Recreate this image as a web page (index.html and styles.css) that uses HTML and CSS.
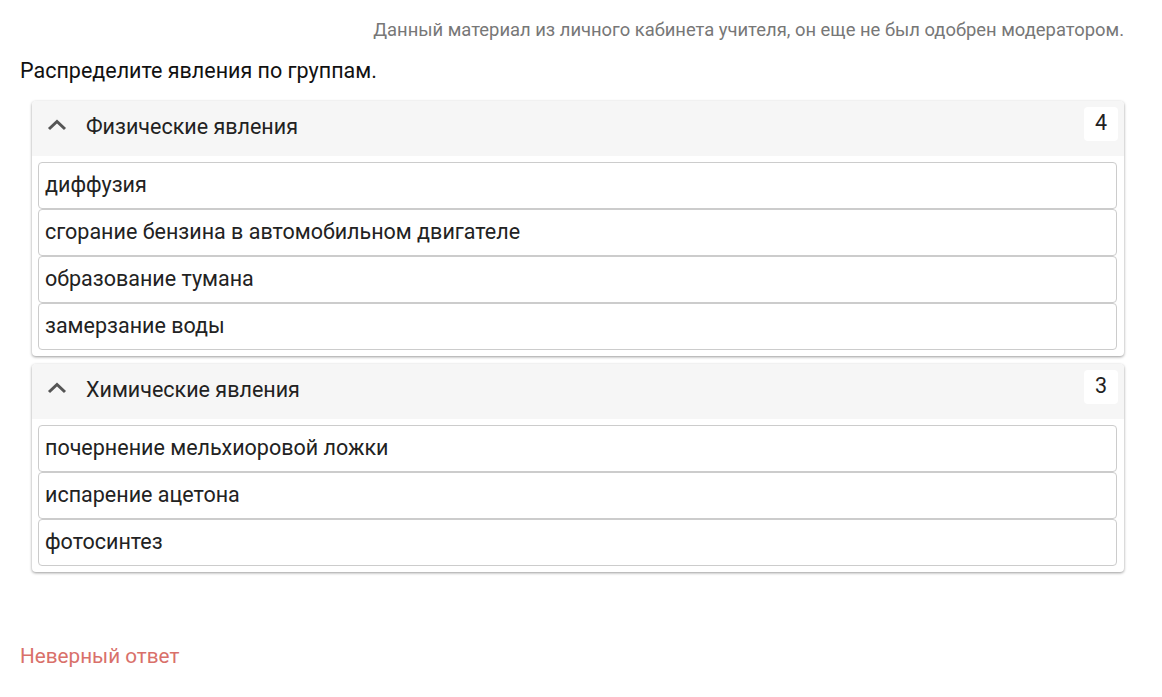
FILE: index.html
```html
<!DOCTYPE html>
<html lang="ru">
<head>
  <meta charset="UTF-8" />
  <title>Распределите явления по группам</title>
  <link rel="stylesheet" href="styles.css">
</head>
<body>

  <div class="note">Данный материал из личного кабинета учителя, он еще не был одобрен модератором.</div>

  <div class="question">Распределите явления по группам.</div>

  <!-- Group 1 -->
  <div class="group">
    <div class="group-head">
      <svg class="chevron" width="20" height="12" viewBox="0 0 20 12">
        <path d="M2 10 L10 2.5 L18 10" fill="none" stroke="#555" stroke-width="3" />
      </svg>
      <span class="group-title">Физические явления</span>
      <span class="count">4</span>
    </div>
    <div class="items">
      <div class="item">диффузия</div>
      <div class="item">сгорание бензина в автомобильном двигателе</div>
      <div class="item">образование тумана</div>
      <div class="item">замерзание воды</div>
    </div>
  </div>

  <!-- Group 2 -->
  <div class="group">
    <div class="group-head">
      <svg class="chevron" width="20" height="12" viewBox="0 0 20 12">
        <path d="M2 10 L10 2.5 L18 10" fill="none" stroke="#555" stroke-width="3" />
      </svg>
      <span class="group-title">Химические явления</span>
      <span class="count">3</span>
    </div>
    <div class="items">
      <div class="item">почернение мельхиоровой ложки</div>
      <div class="item">испарение ацетона</div>
      <div class="item">фотосинтез</div>
    </div>
  </div>

  <div class="result">Неверный ответ</div>

</body>
</html>
```

FILE: styles.css
```css
body {
  font-family: Roboto, "Noto Sans", sans-serif;
  background: #fff;
  color: #222;
  margin: 0;
  padding: 18px 38px 0 20px;
}
.note {
  text-align: right;
  font-size: 18.4px;
  color: #777;
  line-height: 24px;
}
.question {
  font-size: 21.5px;
  color: #111;
  line-height: 28px;
  margin-top: 15px;
}
.group {
  margin: 16px 0 8px 12px;
  width: 1092px;
  background: #fff;
  border-radius: 4px;
  box-shadow: 0 1px 3px rgba(0,0,0,0.4);
  padding-bottom: 6px;
}
.group + .group {
  margin-top: 0;
}
.group-head {
  box-sizing: border-box;
  display: flex;
  align-items: center;
  height: 55px;
  background: #f6f6f6;
  border-radius: 4px 4px 0 0;
  padding: 0 6px 4px 15px;
}
.chevron {
  margin-top: -3px;
}
.group-title {
  font-size: 21.5px;
  color: #222;
  margin-left: 19px;
  flex: 1;
}
.count {
  align-self: flex-start;
  margin-top: 6px;
  width: 34px;
  height: 34px;
  background: #fff;
  border-radius: 4px;
  font-size: 21.5px;
  line-height: 32px;
  text-align: center;
  color: #222;
}
.items {
  padding: 6px 7px 0 6px;
}
.item {
  box-sizing: border-box;
  height: 47px;
  border: 1px solid #ccc;
  border-radius: 4px;
  padding-left: 6px;
  font-size: 21.5px;
  line-height: 44px;
  color: #222;
}
.result {
  margin-top: 72px;
  font-size: 20.7px;
  color: #d9706a;
}
```
